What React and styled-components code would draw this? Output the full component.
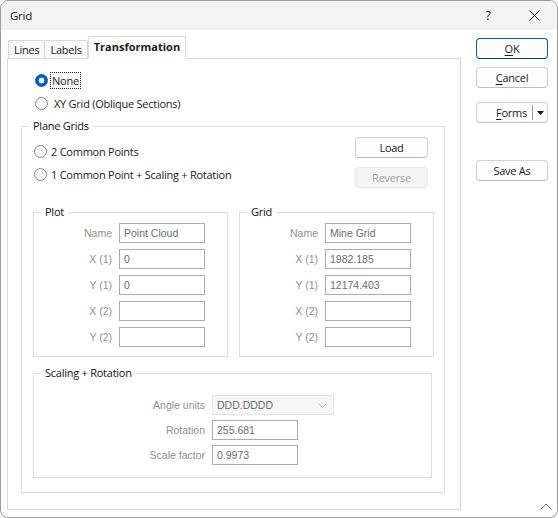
import React from 'react';
import styled, {createGlobalStyle} from 'styled-components';

const Global = createGlobalStyle`
  html, body { margin: 0; padding: 0; background: #fff; }
  * { box-sizing: border-box; }
`;

const UI = `"Open Sans", "Noto Sans", sans-serif`;
const FIELD = `"Liberation Sans", "DejaVu Sans", sans-serif`;

const Window = styled.div`
  width: 558px;
  height: 518px;
  border: 1px solid #9d9d9d;
  border-radius: 8px;
  overflow: hidden;
  background: #fff;
  font-family: ${UI};
  font-size: 11px;
  letter-spacing: -0.25px;
  color: #1a1a1a;
  display: flex;
  flex-direction: column;
`;

const TitleBar = styled.div`
  height: 29px;
  background: #f3f3f3;
  display: flex;
  align-items: center;
  padding: 0 0 0 9px;
  font-size: 11.5px;
`;

const Title = styled.span`
  flex: 1;
`;

const TitleBtn = styled.span`
  width: 46px;
  display: flex;
  justify-content: center;
  align-items: center;
  font-size: 12.5px;
`;

const Body = styled.div`
  flex: 1;
  display: flex;
  padding: 7px 9px 7px 6px;
  gap: 15px;
  position: relative;
`;

const TabsCol = styled.div`
  width: 454px;
  display: flex;
  flex-direction: column;
`;

const TabStrip = styled.div`
  display: flex;
  align-items: flex-end;
  height: 22px;
  padding-left: 1px;
  margin-bottom: -1px;
  position: relative;
  z-index: 1;
`;

const Tab = styled.div`
  height: ${p => (p.$active ? '23px' : '19px')};
  padding: 0 5px;
  border: 1px solid #d9d9d9;
  border-bottom: ${p => (p.$active ? '1px solid #fff' : '1px solid #d9d9d9')};
  border-left: ${p => (p.$first || p.$active ? '1px solid #d9d9d9' : 'none')};
  background: ${p => (p.$active ? '#fff' : '#f9f9f9')};
  font-weight: ${p => (p.$active ? 700 : 400)};
  display: flex;
  align-items: center;
  padding-bottom: ${p => (p.$active ? '3px' : '0')};
  letter-spacing: ${p => (p.$active ? '0' : '-0.25px')};
`;

const Panel = styled.div`
  flex: 1;
  border: 1px solid #d9d9d9;
  padding: 13px 15px 13px 13px;
`;

const RadioList = styled.div`
  display: flex;
  flex-direction: column;
  gap: 7px;
  padding-left: ${p => p.$indent || 0}px;
  padding-top: ${p => p.$top || 0}px;
`;

const RadioRow = styled.label`
  display: flex;
  align-items: center;
  height: 16px;
  gap: ${p => p.$gap || 4}px;
  white-space: nowrap;
`;

const RadioDot = styled.span`
  width: 13px;
  height: 13px;
  border-radius: 50%;
  flex: none;
  ${p =>
    p.$checked
      ? `border: 1px solid #005fb8; background: radial-gradient(circle, #fff 0 2.6px, #005fb8 3.2px);`
      : `background: #f7f7f7; border: 1px solid #8a8a8a;`}
`;

const Focus = styled.span`
  outline: 1px dotted #222;
  padding: 0 1px;
  line-height: 15px;
`;

const Group = styled.fieldset`
  margin: ${p => p.$margin || '0'};
  padding: ${p => p.$pad || '0'};
  border: 1px solid #dcdcdc;
  min-width: 0;
`;

const Legend = styled.legend`
  margin-left: 7px;
  padding: 0 4px;
  line-height: 16px;
  height: 16px;
  color: #111;
`;

const TopSection = styled.div`
  display: flex;
  justify-content: space-between;
  padding: 3px 16px 0 12px;
`;

const SideButtons = styled.div`
  display: flex;
  flex-direction: column;
  gap: 9px;
`;

const ActionColumn = styled.div`
  display: flex;
  flex-direction: column;
  padding-top: 1px;
`;

const Button = styled.div`
  width: ${p => p.$w || 72}px;
  height: 21px;
  border: 1px solid ${p => (p.$primary ? '#005fb8' : p.$disabled ? '#e8e8e8' : '#d0d0d0')};
  border-bottom-color: ${p => (p.$primary ? '#003d7a' : p.$disabled ? '#e8e8e8' : '#bdbdbd')};
  border-radius: 4px;
  background: ${p => (p.$disabled ? '#f5f5f5' : '#fdfdfd')};
  color: ${p => (p.$disabled ? '#a0a0a0' : '#1a1a1a')};
  display: flex;
  align-items: center;
  justify-content: center;
  margin-top: ${p => p.$mt || 0}px;
  u { text-decoration: underline; text-underline-offset: 2px; }
`;

const SplitButton = styled(Button)`
  justify-content: flex-end;
  padding: 0;
`;

const SplitLabel = styled.span`
  padding-right: 5px;
`;

const SplitArrow = styled.span`
  width: 15px;
  height: 15px;
  border-left: 1px solid #9a9a9a;
  display: flex;
  align-items: center;
  justify-content: center;
`;

const Pair = styled.div`
  display: grid;
  grid-template-columns: 195px 195px;
  column-gap: 11px;
  padding: 0 10px 0 11px;
  margin-top: 16px;
`;

const Fields = styled.div`
  display: grid;
  grid-template-columns: ${p => p.$label || 78}px auto;
  column-gap: ${p => p.$gap || 7}px;
  row-gap: ${p => p.$rowGap || 6}px;
  align-items: center;
  justify-items: start;
  padding: ${p => p.$pad || '3px 0 9px 0'};
`;

const FieldLabel = styled.span`
  justify-self: end;
  font-family: ${FIELD};
  font-size: 10.5px;
  letter-spacing: 0;
  color: #8f8f8f;
`;

const Input = styled.div`
  width: ${p => p.$w || 86}px;
  height: 20px;
  border: 1px solid #acacac;
  padding: 0 4px;
  font-family: ${FIELD};
  font-size: 10.5px;
  letter-spacing: 0;
  color: #6d6d6d;
  display: flex;
  align-items: center;
`;

const Select = styled(Input)`
  border-color: #e3e3e3;
  background: #f7f7f7;
  justify-content: space-between;
  padding-right: 6px;
`;

const Grip = styled.svg`
  position: absolute;
  right: 5px;
  bottom: 7px;
`;

const Chevron = ({color = '#b5b5b5', size = 9}) => (
  <svg width={size} height={size / 1.8} viewBox="0 0 10 5.5">
    <path d="M0.5 0.5 L5 5 L9.5 0.5" fill="none" stroke={color} strokeWidth="1" />
  </svg>
);

const Radio = ({checked, children, gap, focus}) => (
  <RadioRow $gap={gap}>
    <RadioDot $checked={checked} />
    {focus ? <Focus>{children}</Focus> : <span>{children}</span>}
  </RadioRow>
);

const plot = [
  ['Name', 'Point Cloud'],
  ['X (1)', '0'],
  ['Y (1)', '0'],
  ['X (2)', ''],
  ['Y (2)', ''],
];

const grid = [
  ['Name', 'Mine Grid'],
  ['X (1)', '1982.185'],
  ['Y (1)', '12174.403'],
  ['X (2)', ''],
  ['Y (2)', ''],
];

function FieldGroup({title, rows}) {
  return (
    <Group>
      <Legend>{title}</Legend>
      <Fields>
        {rows.map(([label, value]) => (
          <React.Fragment key={label}>
            <FieldLabel>{label}</FieldLabel>
            <Input>{value}</Input>
          </React.Fragment>
        ))}
      </Fields>
    </Group>
  );
}

export default function App() {
  return (
    <>
      <Global />
      <Window>
        <TitleBar>
          <Title>Grid</Title>
          <TitleBtn>?</TitleBtn>
          <TitleBtn>
            <svg width="11" height="11" viewBox="0 0 11 11">
              <path d="M0.5 0.5 L10.5 10.5 M10.5 0.5 L0.5 10.5" stroke="#1a1a1a" strokeWidth="1" />
            </svg>
          </TitleBtn>
        </TitleBar>
        <Body>
          <TabsCol>
            <TabStrip>
              <Tab $first>Lines</Tab>
              <Tab>Labels</Tab>
              <Tab $active>Transformation</Tab>
            </TabStrip>
            <Panel>
              <RadioList $indent={14}>
                <Radio checked focus gap={3}>None</Radio>
                <Radio gap={6}>XY Grid (Oblique Sections)</Radio>
              </RadioList>

              <Group $margin="7px 0 0 0" $pad="0 0 14px 0">
                <Legend>Plane Grids</Legend>
                <TopSection>
                  <RadioList $top={6}>
                    <Radio gap={4}>2 Common Points</Radio>
                    <Radio gap={4}>1 Common Point + Scaling + Rotation</Radio>
                  </RadioList>
                  <SideButtons>
                    <Button $w={73}>Load</Button>
                    <Button $w={73} $disabled>Reverse</Button>
                  </SideButtons>
                </TopSection>

                <Pair>
                  <FieldGroup title="Plot" rows={plot} />
                  <FieldGroup title="Grid" rows={grid} />
                </Pair>

                <Group $margin="8px 12px 0 11px">
                  <Legend>Scaling + Rotation</Legend>
                  <Fields $label={171} $rowGap={5} $pad="14px 0 12px 0">
                    <FieldLabel>Angle units</FieldLabel>
                    <Select $w={122}>
                      DDD.DDDD
                      <Chevron />
                    </Select>
                    <FieldLabel>Rotation</FieldLabel>
                    <Input>255.681</Input>
                    <FieldLabel>Scale factor</FieldLabel>
                    <Input>0.9973</Input>
                  </Fields>
                </Group>
              </Group>
            </Panel>
          </TabsCol>

          <ActionColumn>
            <Button $primary><u>O</u>K</Button>
            <Button $mt={8}><u>C</u>ancel</Button>
            <SplitButton $mt={14}>
              <SplitLabel><u>F</u>orms</SplitLabel>
              <SplitArrow>
                <svg width="7" height="4" viewBox="0 0 7 4">
                  <path d="M0 0 H7 L3.5 4 Z" fill="#1a1a1a" />
                </svg>
              </SplitArrow>
            </SplitButton>
            <Button $mt={37}>Save As</Button>
          </ActionColumn>

          <Grip width="12" height="7" viewBox="0 0 12 7">
            <path d="M0.5 6.5 L6 1 L11.5 6.5" fill="none" stroke="#6a6a6a" strokeWidth="1" />
          </Grip>
        </Body>
      </Window>
    </>
  );
}
